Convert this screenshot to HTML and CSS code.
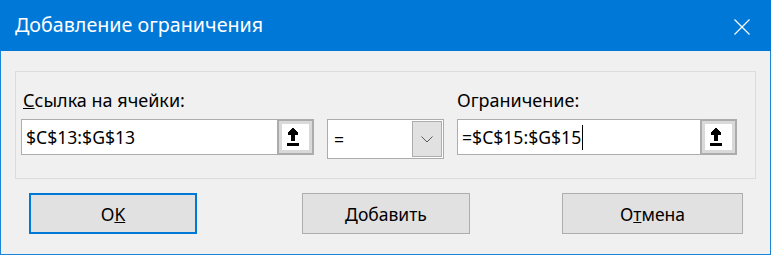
FILE: index.html
```html
<!DOCTYPE html>
<html lang="ru">
<head>
    <meta charset="UTF-8">
    <title>Добавление ограничения</title>
    <link rel="stylesheet" href="styles.css">
</head>
<body>
    <div class="dialog">
        <div class="titlebar">
            <span class="title">Добавление ограничения</span>
            <svg class="close" width="16" height="16" viewBox="0 0 16 16">
                <path d="M0.5 0.5 L15.5 15.5 M15.5 0.5 L0.5 15.5" stroke="#fff" stroke-width="1.2" fill="none"/>
            </svg>
        </div>

        <div class="content">
            <div class="group">
                <div class="row">
                    <label class="label label-ref"><u>С</u>сылка на ячейки:</label>
                    <span></span>
                    <label class="label">Ограничение:</label>

                    <div class="field field-ref">
                        <span class="value">$C$13:$G$13</span>
                        <span class="pick">
                            <span class="pick-inner">
                                <svg width="20" height="20" viewBox="0 0 20 20" shape-rendering="crispEdges">
                                    <polygon points="9,1 11,1 11,2 12,2 12,3 13,3 13,4 14,4 14,5 15,5 15,8 12,8 12,14 8,14 8,8 5,8 5,5 6,5 6,4 7,4 7,3 8,3 8,2 9,2" fill="#000"/>
                                    <rect x="4" y="16" width="12" height="3" fill="#000"/>
                                </svg>
                            </span>
                        </span>
                    </div>

                    <div class="combo">
                        <span class="value combo-value">=</span>
                        <span class="combo-btn">
                            <svg width="12" height="7" viewBox="0 0 12 7">
                                <path d="M0.5 0.5 L6 6 L11.5 0.5" stroke="#5a5a5a" stroke-width="1" fill="none"/>
                            </svg>
                        </span>
                    </div>

                    <div class="field field-limit">
                        <span class="value">=$C$15:$G$15<span class="caret"></span></span>
                        <span class="pick">
                            <span class="pick-inner">
                                <svg width="20" height="20" viewBox="0 0 20 20" shape-rendering="crispEdges">
                                    <polygon points="9,1 11,1 11,2 12,2 12,3 13,3 13,4 14,4 14,5 15,5 15,8 12,8 12,14 8,14 8,8 5,8 5,5 6,5 6,4 7,4 7,3 8,3 8,2 9,2" fill="#000"/>
                                    <rect x="4" y="16" width="12" height="3" fill="#000"/>
                                </svg>
                            </span>
                        </span>
                    </div>
                </div>
            </div>

            <div class="actions">
                <button class="btn btn-ok">O<u>K</u></button>
                <button class="btn btn-add"><u>Д</u>обавить</button>
                <button class="btn btn-cancel">О<u>т</u>мена</button>
            </div>
        </div>
    </div>
</body>
</html>
```

FILE: styles.css
```css
* {
    box-sizing: border-box;
}

body {
    margin: 0;
    font-family: "Noto Sans", "Open Sans", sans-serif;
    background-color: #f0f0f0;
}

.dialog {
    width: 771px;
    height: 255px;
    background-color: #f0f0f0;
    border: 1px solid #1c84d8;
    border-top: none;
}

.titlebar {
    height: 51px;
    margin: 0 -1px;
    background-color: #0078d7;
    color: #fff;
    display: flex;
    align-items: center;
    padding-left: 15px;
    padding-right: 21px;
}

.title {
    font-size: 19.7px;
    flex: 1;
    margin-top: -2px;
}

.close {
    margin-top: 2px;
}

.content {
    padding: 20px 0 0 14px;
}

.group {
    width: 741px;
    height: 108px;
    border: 1px solid #dcdcdc;
    padding: 18px 0 0 5px;
}

.row {
    display: grid;
    grid-template-columns: 293px 117px 280px;
    column-gap: 13px;
    row-gap: 8px;
    align-items: start;
}

.label {
    font-size: 18px;
    color: #000;
    height: 21px;
    line-height: 21px;
    white-space: nowrap;
}

.label-ref {
    padding-left: 2px;
}

.field {
    height: 36px;
    display: flex;
    background-color: #fff;
    border: 1px solid #adadad;
}

.value {
    flex: 1;
    font-size: 17.6px;
    line-height: 34px;
    padding-left: 4px;
    color: #000;
    white-space: nowrap;
}

.caret {
    display: inline-block;
    width: 1px;
    height: 25px;
    background-color: #000;
    vertical-align: -6px;
    margin-left: 1px;
}

.pick {
    width: 37px;
    height: 36px;
    margin: -1px -1px -1px 0;
    border: 2px solid #acacac;
    background-color: #d9d9d9;
    padding: 3px;
}

.pick-inner {
    display: flex;
    align-items: center;
    justify-content: center;
    width: 100%;
    height: 100%;
    background-color: #fff;
    padding-right: 5px;
}

.combo {
    height: 40px;
    display: flex;
    background-color: #fff;
    border: 1px solid #acacac;
    padding: 1px;
}

.combo-value {
    padding-left: 5px;
    line-height: 36px;
}

.combo-btn {
    width: 30px;
    background-color: #e1e1e1;
    border: 1px solid #adadad;
    display: flex;
    align-items: center;
    justify-content: center;
}

.actions {
    display: flex;
    margin-top: 14px;
}

.btn {
    height: 41px;
    font-family: "Noto Sans", "Open Sans", sans-serif;
    font-size: 17.5px;
    color: #000;
    background-color: #e1e1e1;
    border: 1px solid #adadad;
    padding: 0;
}

.btn-ok {
    width: 168px;
    margin-left: 14px;
    border: 2px solid #0078d7;
}

.btn-add {
    width: 168px;
    margin-left: 105px;
}

.btn-cancel {
    width: 181px;
    margin-left: 92px;
}
```
